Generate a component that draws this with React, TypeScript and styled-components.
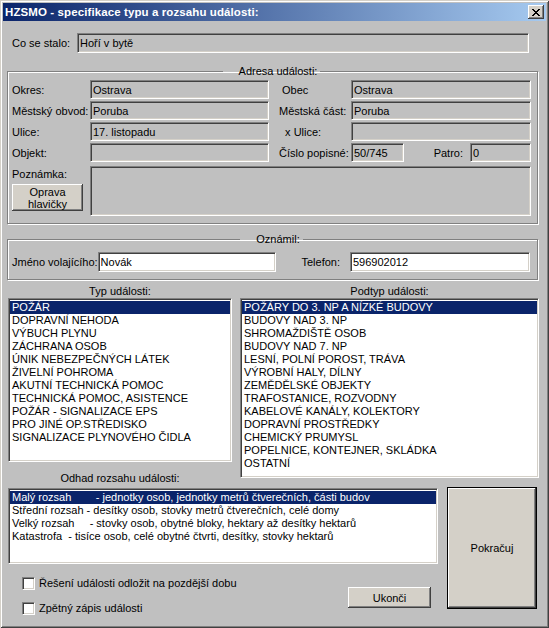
import React from 'react'
import styled, { createGlobalStyle } from 'styled-components'

const GlobalStyle = createGlobalStyle`
  html, body {
    margin: 0;
    padding: 0;
    background: #c0c0c0;
  }
  body {
    font-family: 'Liberation Sans', Arial, sans-serif;
    font-size: 11px;
    color: #000;
  }
  * {
    box-sizing: border-box;
  }
`

const Window = styled('div')`
  width: 549px;
  height: 628px;
  padding: 3px;
  display: flex;
  flex-direction: column;
  background: #c0c0c0;
  box-shadow: inset 1px 1px 0 #d4d0c8, inset -1px -1px 0 #404040,
    inset 2px 2px 0 #fff, inset -2px -2px 0 #808080;
`

const TitleBar = styled('div')`
  height: 18px;
  display: flex;
  align-items: center;
  justify-content: space-between;
  padding: 0 2px;
  background: linear-gradient(to right, #0a246a, #a6caf0);
  color: #fff;
  font-weight: bold;
  font-size: 11.5px;
  letter-spacing: 0.1px;
`

const CloseButton = styled('div')`
  width: 16px;
  height: 14px;
  display: flex;
  align-items: center;
  justify-content: center;
  background: #d4d0c8;
  box-shadow: inset -1px -1px 0 #404040, inset 1px 1px 0 #fff,
    inset -2px -2px 0 #808080;
`

const Body = styled('div')`
  display: flex;
  flex-direction: column;
  padding: 12px 7px 0 4px;
`

const TopRow = styled('div')`
  display: flex;
  align-items: center;
  padding-left: 5px;
  margin-right: 10px;
`

const Label = styled('span')<{ $width?: number }>`
  display: flex;
  align-items: center;
  white-space: nowrap;
  ${p => (p.$width ? `width: ${p.$width}px; flex: none;` : '')}
`

const Field = styled('input')<{ $editable?: boolean; $width?: number; $height?: number }>`
  height: ${p => p.$height ?? 19}px;
  ${p => (p.$width ? `width: ${p.$width}px; flex: none;` : 'width: 100%; min-width: 0;')}
  padding: 0 2px;
  margin: 0;
  font: inherit;
  color: #000;
  background: ${p => (p.$editable ? '#fff' : '#c0c0c0')};
  border: 1px solid;
  border-color: #808080 #fff #fff #808080;
  box-shadow: inset 1px 1px 0 #404040, inset -1px -1px 0 #d4d0c8;
  outline: none;
`

const NoteBox = styled('textarea')`
  grid-column: 2 / 6;
  height: 50px;
  margin: 2px 0 0;
  padding: 2px;
  resize: none;
  font: inherit;
  background: #c0c0c0;
  border: 1px solid;
  border-color: #808080 #fff #fff #808080;
  box-shadow: inset 1px 1px 0 #404040, inset -1px -1px 0 #d4d0c8;
  outline: none;
`

const Group = styled('fieldset')<{ $top: number }>`
  margin: ${p => p.$top}px 1px 0 0;
  padding: 1px 6px 7px 4px;
  min-width: 0;
  border: 1px solid #808080;
  box-shadow: inset 1px 1px 0 #fff, 1px 1px 0 #fff;
`

const Legend = styled('legend')`
  margin: 0 auto;
  padding: 0 3px 0 16px;
  line-height: 13px;
`

const AddressGrid = styled('div')`
  display: grid;
  grid-template-columns: 78px 179px 10px 72px 180px;
  grid-template-rows: repeat(4, 19px) auto;
  row-gap: 2px;
  padding-top: 1px;
`

const RightLabel = styled(Label)`
  grid-column: 4;
`

const RightField = styled('div')`
  grid-column: 5;
  display: flex;
  align-items: center;
`

const PatroLabel = styled('span')`
  margin: 0 7px 0 auto;
`

const PhoneLabel = styled(Label)`
  margin: 0 10px 0 auto;
`

const NoteCell = styled('div')`
  grid-column: 1;
  display: flex;
  flex-direction: column;
  align-items: flex-start;
  padding-top: 4px;
  gap: 4px;
`

const Button = styled('button')<{ $default?: boolean; $width: number; $height: number }>`
  width: ${p => p.$width}px;
  height: ${p => p.$height}px;
  padding: 0;
  margin: 0;
  font: inherit;
  line-height: 12px;
  color: #000;
  background: #d4d0c8;
  border: ${p => (p.$default ? '1px solid #000' : 'none')};
  box-shadow: inset -1px -1px 0 #404040, inset 1px 1px 0 #fff,
    inset -2px -2px 0 #808080;
`

const CallerRow = styled('div')`
  display: flex;
  align-items: center;
  padding: 5px 1px 0 0;
`

const ListGrid = styled('div')`
  display: grid;
  grid-template-columns: 224px 8px 198px 9px 92px;
  grid-template-rows: 13px 164px 26px 76px 45px;
  margin: 5px 0 0 1px;
`

const Caption = styled('div')<{ $col: string; $row: string }>`
  grid-column: ${p => p.$col};
  grid-row: ${p => p.$row};
  align-self: end;
  text-align: center;
  line-height: 13px;
  padding-bottom: ${p => (p.$row === '3' ? 3 : 0)}px;
`

const ListBox = styled('div')<{ $col: string; $row: string; $height: number }>`
  grid-column: ${p => p.$col};
  grid-row: ${p => p.$row};
  align-self: start;
  height: ${p => p.$height}px;
  padding: 2px 0 0;
  overflow: hidden;
  background: #fff;
  border: 1px solid;
  border-color: #808080 #fff #fff #808080;
  box-shadow: inset 1px 1px 0 #404040, inset -1px -1px 0 #d4d0c8;
`

const ListItem = styled('div')<{ $selected?: boolean }>`
  height: 13px;
  line-height: 13px;
  margin: 0 1px;
  padding-left: 2px;
  white-space: pre;
  background: ${p => (p.$selected ? '#0a246a' : 'transparent')};
  color: ${p => (p.$selected ? '#fff' : '#000')};
`

const BottomBar = styled('div')`
  grid-column: 1 / 4;
  grid-row: 5;
  display: flex;
  align-items: flex-start;
  padding: 13px 7px 0 14px;
`

const CheckList = styled('div')`
  display: flex;
  flex-direction: column;
  gap: 12px;
`

const CheckRow = styled('label')`
  display: flex;
  align-items: center;
  gap: 4px;
  line-height: 13px;
`

const CheckBox = styled('input')`
  appearance: none;
  width: 13px;
  height: 13px;
  margin: 0;
  background: #fff;
  border: 1px solid;
  border-color: #808080 #fff #fff #808080;
  box-shadow: inset 1px 1px 0 #404040, inset -1px -1px 0 #d4d0c8;
`

const ExitWrap = styled('div')`
  margin: 10px 0 0 auto;
`

const ContinueWrap = styled('div')`
  grid-column: 5;
  grid-row: 4 / 6;
  margin-top: -1px;
`

const typy = [
  'POŽÁR',
  'DOPRAVNÍ NEHODA',
  'VÝBUCH PLYNU',
  'ZÁCHRANA OSOB',
  'ÚNIK NEBEZPEČNÝCH LÁTEK',
  'ŽIVELNÍ POHROMA',
  'AKUTNÍ TECHNICKÁ POMOC',
  'TECHNICKÁ POMOC, ASISTENCE',
  'POŽÁR - SIGNALIZACE EPS',
  'PRO JINÉ OP.STŘEDISKO',
  'SIGNALIZACE PLYNOVÉHO ČIDLA',
]

const podtypy = [
  'POŽÁRY DO 3. NP A NÍZKÉ BUDOVY',
  'BUDOVY NAD 3. NP',
  'SHROMAŽDIŠTĚ OSOB',
  'BUDOVY NAD 7. NP',
  'LESNÍ, POLNÍ POROST, TRÁVA',
  'VÝROBNÍ HALY, DÍLNY',
  'ZEMĚDĚLSKÉ OBJEKTY',
  'TRAFOSTANICE, ROZVODNY',
  'KABELOVÉ KANÁLY, KOLEKTORY',
  'DOPRAVNÍ PROSTŘEDKY',
  'CHEMICKÝ PRUMYSL',
  'POPELNICE, KONTEJNER, SKLÁDKA',
  'OSTATNÍ',
]

const rozsahy = [
  'Malý rozsah        - jednotky osob, jednotky metrů čtverečních, části budov',
  'Střední rozsah - desítky osob, stovky metrů čtverečních, celé domy',
  'Velký rozsah     - stovky osob, obytné bloky, hektary až desítky hektarů',
  'Katastrofa  - tisíce osob, celé obytné čtvrti, desítky, stovky hektarů',
]

function List({ items, col, row, height }: { items: string[]; col: string; row: string; height: number }) {
  return (
    <ListBox $col={col} $row={row} $height={height}>
      {items.map((item, i) => (
        <ListItem key={item} $selected={i === 0}>
          {item}
        </ListItem>
      ))}
    </ListBox>
  )
}

export default function App() {
  return (
    <>
      <GlobalStyle />
      <Window>
        <TitleBar>
          <span>HZSMO - specifikace typu a rozsahu události:</span>
          <CloseButton>
            <svg width="8" height="7" viewBox="0 0 8 7" shapeRendering="crispEdges">
              <path
                d="M0 0h2v1h1v1h2V1h1V0h2v1H7v1H6v1H5v1h1v1h1v1h1v1H6V6H5V5H3v1H2v1H0V6h1V5h1V4h1V3H2V2H1V1H0z"
                fill="#000"
              />
            </svg>
          </CloseButton>
        </TitleBar>

        <Body>
          <TopRow>
            <Label $width={65}>Co se stalo:</Label>
            <Field readOnly value="Hoří v bytě" $height={20} />
          </TopRow>

          <Group $top={12}>
            <Legend>Adresa události:</Legend>
            <AddressGrid>
              <Label>Okres:</Label>
              <Field readOnly value="Ostrava" />
              <RightLabel>&nbsp;Obec</RightLabel>
              <RightField>
                <Field readOnly value="Ostrava" />
              </RightField>

              <Label>Městský obvod:</Label>
              <Field readOnly value="Poruba" />
              <RightLabel>Městská část:</RightLabel>
              <RightField>
                <Field readOnly value="Poruba" />
              </RightField>

              <Label>Ulice:</Label>
              <Field readOnly value="17. listopadu" />
              <RightLabel>&nbsp;&nbsp;x Ulice:</RightLabel>
              <RightField>
                <Field readOnly value="" />
              </RightField>

              <Label>Objekt:</Label>
              <Field readOnly value="" />
              <RightLabel>Číslo popisné:</RightLabel>
              <RightField>
                <Field readOnly value="50/745" $width={53} />
                <PatroLabel>Patro:</PatroLabel>
                <Field readOnly value="0" $width={61} />
              </RightField>

              <NoteCell>
                <span>Poznámka:</span>
                <Button $width={71} $height={27}>
                  Oprava
                  <br />
                  hlavičky
                </Button>
              </NoteCell>
              <NoteBox readOnly value="" />
            </AddressGrid>
          </Group>

          <Group $top={9}>
            <Legend>Oznámil:</Legend>
            <CallerRow>
              <Label>Jméno volajícího:</Label>
              <Field $editable readOnly value="Novák" $width={178} $height={20} />
              <PhoneLabel>Telefon:</PhoneLabel>
              <Field $editable readOnly value="596902012" $width={180} $height={20} />
            </CallerRow>
          </Group>

          <ListGrid>
            <Caption $col="1" $row="1">Typ události:</Caption>
            <Caption $col="3 / 6" $row="1">Podtyp události:</Caption>
            <List items={typy} col="1" row="2" height={164} />
            <List items={podtypy} col="3 / 6" row="2 / 4" height={180} />
            <Caption $col="1" $row="3">Odhad rozsahu události:</Caption>
            <List items={rozsahy} col="1 / 4" row="4" height={76} />

            <BottomBar>
              <CheckList>
                <CheckRow>
                  <CheckBox type="checkbox" />
                  Řešení události odložit na pozdější dobu
                </CheckRow>
                <CheckRow>
                  <CheckBox type="checkbox" />
                  Zpětný zápis události
                </CheckRow>
              </CheckList>
              <ExitWrap>
                <Button $width={83} $height={21}>Ukonči</Button>
              </ExitWrap>
            </BottomBar>

            <ContinueWrap>
              <Button $default $width={90} $height={122}>Pokračuj</Button>
            </ContinueWrap>
          </ListGrid>
        </Body>
      </Window>
    </>
  )
}
